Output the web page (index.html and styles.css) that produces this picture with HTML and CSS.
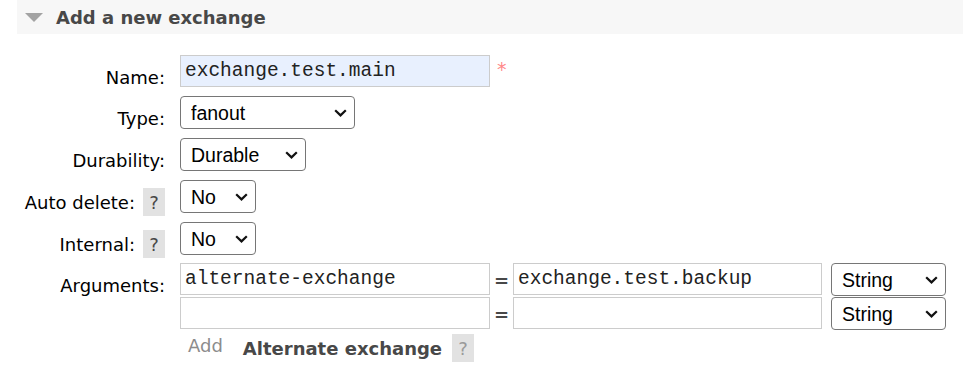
FILE: index.html
```html
<!DOCTYPE html>
<html>
<head>
<meta charset="utf-8">
<link rel="stylesheet" href="styles.css">
</head>
<body>
<div class="section">
  <h2 class="section-title"><span class="arrow"></span>Add a new exchange</h2>
  <form class="form">
    <div class="row">
      <div class="label"><label>Name:</label></div>
      <div class="field inline">
        <input class="text autofill name-input" type="text" value="exchange.test.main">
        <span class="mand">*</span>
      </div>
    </div>
    <div class="row">
      <div class="label"><label>Type:</label></div>
      <div class="field"><select class="sel sel-type"><option>fanout</option></select></div>
    </div>
    <div class="row">
      <div class="label"><label>Durability:</label></div>
      <div class="field"><select class="sel sel-dur"><option>Durable</option></select></div>
    </div>
    <div class="row">
      <div class="label"><label>Auto delete:</label><span class="help">?</span></div>
      <div class="field"><select class="sel sel-yn"><option>No</option></select></div>
    </div>
    <div class="row">
      <div class="label"><label>Internal:</label><span class="help">?</span></div>
      <div class="field"><select class="sel sel-yn"><option>No</option></select></div>
    </div>
    <div class="row row-args">
      <div class="label"><label>Arguments:</label></div>
      <div class="field">
        <div class="multifield">
          <div class="mf-row">
            <input class="text mf-key" type="text" value="alternate-exchange">
            <span class="eq">=</span>
            <input class="text mf-val" type="text" value="exchange.test.backup">
            <select class="sel sel-kind"><option>String</option></select>
          </div>
          <div class="mf-row">
            <input class="text mf-key" type="text" value="">
            <span class="eq">=</span>
            <input class="text mf-val" type="text" value="">
            <select class="sel sel-kind"><option>String</option></select>
          </div>
        </div>
        <div class="arg-links">
          <span class="add">Add</span>
          <span class="arg-link">Alternate exchange</span>
          <span class="help help-light">?</span>
        </div>
      </div>
    </div>
  </form>
</div>
</body>
</html>
```

FILE: styles.css
```css
html, body {
  margin: 0;
  padding: 0;
  background: #ffffff;
}

body {
  font-family: "DejaVu Sans", Verdana, sans-serif;
  font-size: 18px;
  color: #484848;
}

.section-title {
  margin: 0 0 0 17px;
  height: 34px;
  background: #f7f7f7;
  display: flex;
  align-items: center;
  font-size: 18px;
  font-weight: bold;
  color: #484848;
  padding-left: 8px;
}

.arrow {
  width: 0;
  height: 0;
  border-left: 9px solid transparent;
  border-right: 9px solid transparent;
  border-top: 9px solid #a3a3a3;
  margin-right: 13px;
  margin-top: 1px;
}

.form {
  margin-top: 21px;
}

.row {
  display: flex;
  align-items: flex-start;
  gap: 15px;
  margin-bottom: 9px;
}

.row-args {
  margin-top: -1px;
}

.label {
  width: 165px;
  flex: none;
  height: 28px;
  margin-top: 8px;
  margin-bottom: -8px;
  display: flex;
  justify-content: flex-end;
  align-items: center;
  gap: 8px;
  color: #000;
}

.help {
  display: inline-flex;
  width: 22px;
  height: 28px;
  background: #e2e2e2;
  align-items: center;
  justify-content: center;
  color: #484848;
  font-size: 18px;
  flex: none;
}

.help-light {
  color: #9a9a9a;
}

.field.inline {
  display: flex;
  align-items: flex-start;
}

.text {
  box-sizing: border-box;
  height: 32px;
  border: 1px solid #cccccc;
  padding: 0 4px;
  margin: 0;
  font-family: "Liberation Mono", "Courier New", monospace;
  font-size: 19.5px;
  color: #222;
  background: #fff;
  outline: none;
}

.autofill {
  background: #e8f0fe;
}

.name-input {
  width: 310px;
}

.mand {
  color: #f88;
  font-size: 19px;
  padding-left: 7px;
  line-height: 1;
  margin-top: 5px;
}

.sel {
  box-sizing: border-box;
  height: 33px;
  margin: 0;
  border: 1px solid #767676;
  border-radius: 4px;
  padding: 0 0 0 10px;
  font-family: "Liberation Sans", Arial, sans-serif;
  font-size: 19.5px;
  color: #000;
  background-color: #fff;
  -webkit-appearance: none;
  appearance: none;
  background-image: url("data:image/svg+xml;utf8,<svg xmlns='http://www.w3.org/2000/svg' width='13' height='8' viewBox='0 0 13 8'><path d='M1.2 1.2 L6.5 6.4 L11.8 1.2' fill='none' stroke='%23111' stroke-width='2.2'/></svg>");
  background-repeat: no-repeat;
  background-position: right 7px center;
}

.sel-type { width: 175px; }
.sel-dur { width: 126px; }
.sel-yn { width: 76px; }
.sel-kind { width: 115px; margin-left: 9px; }

.multifield {
  display: flex;
  flex-direction: column;
  gap: 1px;
}

.mf-row {
  display: flex;
  align-items: flex-start;
}

.mf-key { width: 310px; }
.mf-val { width: 309px; }

.eq {
  width: 23px;
  text-align: center;
  font-weight: bold;
  color: #484848;
  line-height: 32px;
  padding-top: 2px;
  box-sizing: border-box;
  height: 32px;
}

.arg-links {
  display: flex;
  align-items: center;
  margin-top: 4px;
  height: 28px;
}

.add {
  color: #8c8c8c;
  padding-left: 8px;
  margin-right: 20px;
  margin-top: -6px;
}

.arg-link {
  font-weight: bold;
  color: #484848;
  margin-right: 10px;
}
```
